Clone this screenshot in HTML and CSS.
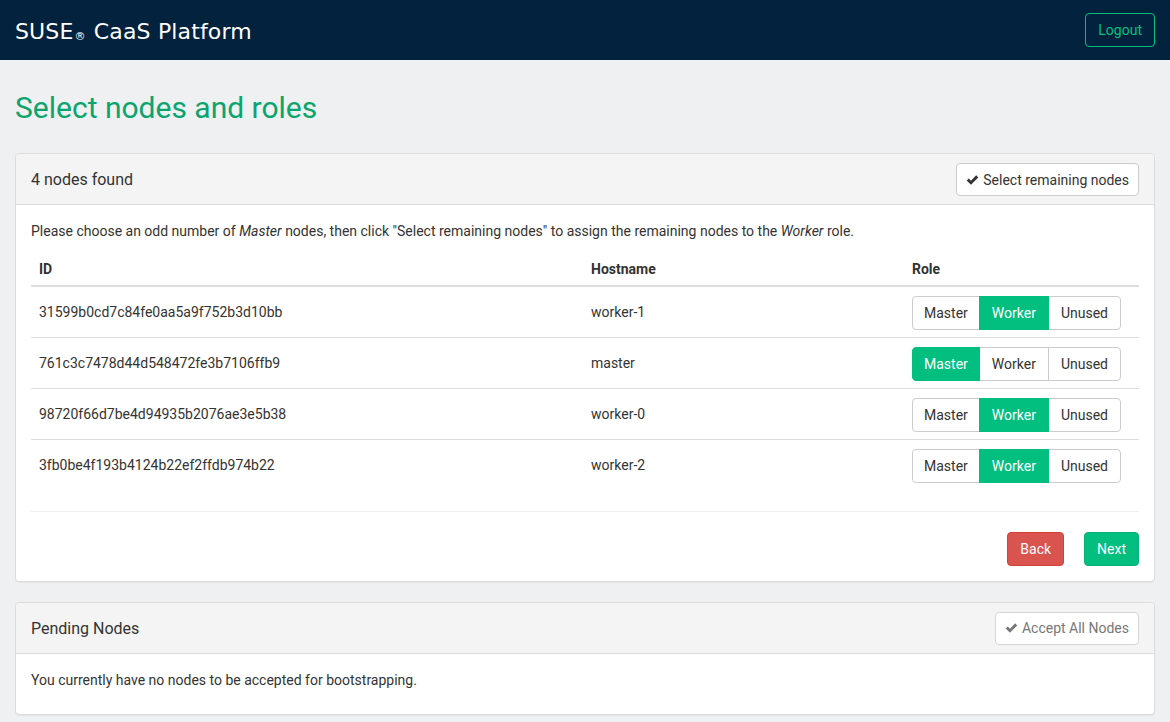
FILE: index.html
```html
<!DOCTYPE html>
<html>
<head>
<meta charset="utf-8">
<link rel="stylesheet" href="styles.css">
</head>
<body>
<header class="navbar">
  <div class="brand">SUSE<span class="reg">®</span> CaaS Platform</div>
  <button class="btn-logout">Logout</button>
</header>
<main class="container">
  <h1 class="page-title">Select nodes and roles</h1>

  <section class="panel">
    <div class="panel-heading">
      <span class="panel-title">4 nodes found</span>
      <button class="btn btn-default"><svg class="check" viewBox="0 0 14 12"><path d="M0.8 6.6 L3 4.4 L5.3 6.7 L11 1 L13.2 3.2 L5.3 11.1 Z"/></svg>Select remaining nodes</button>
    </div>
    <div class="panel-body">
      <p class="intro">Please choose an odd number of <em>Master</em> nodes, then click "Select remaining nodes" to assign the remaining nodes to the <em>Worker</em> role.</p>
      <table class="nodes">
        <thead>
          <tr><th class="c-id">ID</th><th class="c-host">Hostname</th><th class="c-role">Role</th></tr>
        </thead>
        <tbody>
          <tr><td>31599b0cd7c84fe0aa5a9f752b3d10bb</td><td>worker-1</td><td><div class="btn-group"><button class="seg">Master</button><button class="seg active">Worker</button><button class="seg">Unused</button></div></td></tr>
          <tr><td>761c3c7478d44d548472fe3b7106ffb9</td><td>master</td><td><div class="btn-group"><button class="seg active">Master</button><button class="seg">Worker</button><button class="seg">Unused</button></div></td></tr>
          <tr><td>98720f66d7be4d94935b2076ae3e5b38</td><td>worker-0</td><td><div class="btn-group"><button class="seg">Master</button><button class="seg active">Worker</button><button class="seg">Unused</button></div></td></tr>
          <tr><td>3fb0be4f193b4124b22ef2ffdb974b22</td><td>worker-2</td><td><div class="btn-group"><button class="seg">Master</button><button class="seg active">Worker</button><button class="seg">Unused</button></div></td></tr>
        </tbody>
      </table>
      <hr class="divider">
      <div class="actions">
        <button class="btn btn-danger">Back</button>
        <button class="btn btn-success">Next</button>
      </div>
    </div>
  </section>

  <section class="panel">
    <div class="panel-heading">
      <span class="panel-title">Pending Nodes</span>
      <button class="btn btn-default disabled"><svg class="check" viewBox="0 0 14 12"><path d="M0.8 6.6 L3 4.4 L5.3 6.7 L11 1 L13.2 3.2 L5.3 11.1 Z"/></svg>Accept All Nodes</button>
    </div>
    <div class="panel-body">
      <p class="pending">You currently have no nodes to be accepted for bootstrapping.</p>
    </div>
  </section>
</main>
</body>
</html>
```

FILE: styles.css
```css
* { box-sizing: border-box; }
html, body { margin: 0; padding: 0; }
body {
  background: #eff0f2;
  font-family: Roboto, "Liberation Sans", sans-serif;
  font-size: 14px;
  color: #333;
  line-height: 1.42857;
}
button { font-family: inherit; font-size: 14px; cursor: pointer; }

.navbar {
  height: 60px;
  background: #02223e;
  display: flex;
  align-items: center;
  justify-content: space-between;
  padding: 0 15px;
}
.brand {
  font-family: "DejaVu Sans", sans-serif;
  font-size: 22px;
  color: #fff;
  letter-spacing: 0.15px;
  padding-top: 3px;
}
.brand .reg { font-size: 11px; vertical-align: -1px; margin-left: 1px; margin-right: 1px; }
.btn-logout {
  background: transparent;
  border: 1px solid #02c080;
  color: #02c080;
  border-radius: 4px;
  height: 34px;
  padding: 0 12px;
  font-size: 14px;
}

.container { padding: 0 15px 20px; }
.page-title {
  margin: 0;
  padding: 29px 0 27px;
  font-weight: 400;
  font-size: 30px;
  line-height: 37px;
  color: #0aa46d;
}

.panel {
  background: #fff;
  border: 1px solid #dcdcdc;
  border-radius: 4px;
  box-shadow: 0 1px 1px rgba(0,0,0,.05);
  margin-bottom: 20px;
}
.panel-heading {
  background: #f4f4f4;
  border-bottom: 1px solid #dcdcdc;
  border-radius: 3px 3px 0 0;
  height: 51px;
  padding: 1px 15px 0;
  display: flex;
  align-items: center;
  justify-content: space-between;
}
.panel-title { font-size: 16px; color: #333; padding-top: 2px; }
.panel-body { padding: 15px; }

.btn {
  height: 34px;
  border-radius: 4px;
  padding: 0 12px;
  display: inline-flex;
  align-items: center;
  border: 1px solid transparent;
}
.btn-default {
  background: #fff;
  border-color: #ccc;
  color: #333;
  height: 33px;
  padding: 0 9px;
}
.btn-default.disabled { color: #777; border-color: #d6d6d6; cursor: not-allowed; }
.btn-default.disabled .check { fill: #777; }
.check { width: 13px; height: 12px; fill: #333; margin-right: 4px; }
.btn-danger { background: #d9534f; border-color: #d43f3a; color: #fff; }
.btn-success { background: #02be7f; border-color: #02b377; color: #fff; }

.intro { margin: 0 0 10px; padding-top: 1px; line-height: 20px; color: #333; }
.pending { margin: 0 0 9px; padding-top: 1px; line-height: 20px; color: #333; }

.nodes { width: 100%; border-collapse: collapse; }
.nodes th {
  text-align: left;
  font-weight: 700;
  padding: 8px 8px 6px;
  border-bottom: 2px solid #ddd;
  line-height: 20px;
}
.c-id { width: 552px; }
.c-host { width: 321px; }
.nodes td {
  padding: 9px 8px 7px;
  height: 51px;
  border-top: 1px solid #ddd;
  vertical-align: middle;
}
.nodes tbody tr:first-child td { border-top: 0; }

.btn-group { display: inline-flex; }
.seg {
  height: 34px;
  padding: 0 12px;
  background: #fff;
  border: 1px solid #ccc;
  color: #333;
  margin-left: -1px;
}
.seg:first-child { margin-left: 0; border-radius: 4px 0 0 4px; padding: 0 11px; }
.seg:last-child { border-radius: 0 4px 4px 0; }
.seg.active { background: #02be7f; border-color: #02be7f; color: #fff; position: relative; }

.divider { border: 0; border-top: 1px solid #eee; margin: 20px 0; }
.actions { display: flex; justify-content: flex-end; gap: 20px; }
```
